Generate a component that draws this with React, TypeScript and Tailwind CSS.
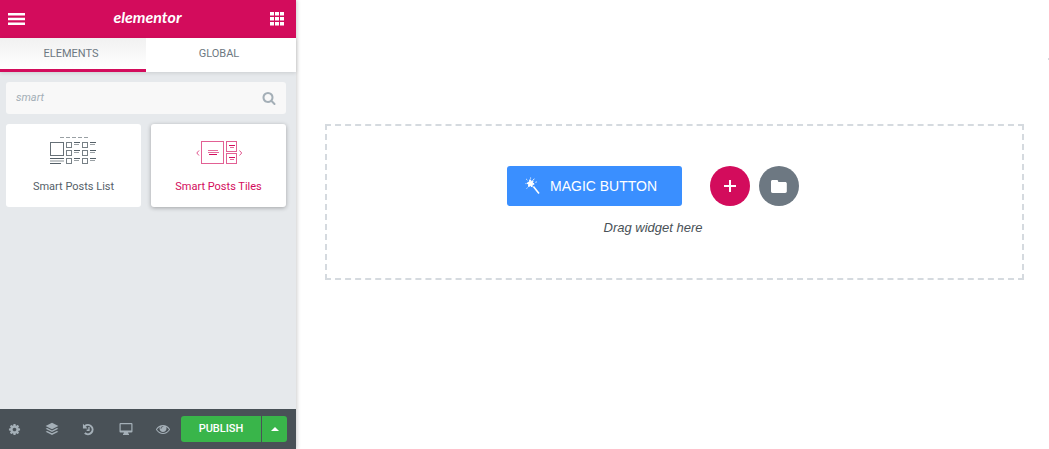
import { FC, ReactNode, useState } from "react"

type IconProps = { className?: string }

const SearchIcon: FC<IconProps> = ({ className }) => (
  <svg viewBox="0 0 1792 1792" fill="currentColor" className={className} aria-hidden="true">
    <path d="M1216 832q0-185-131.5-316.5t-316.5-131.5-316.5 131.5-131.5 316.5 131.5 316.5 316.5 131.5 316.5-131.5 131.5-316.5zm512 832q0 52-38 90t-90 38q-54 0-90-38l-343-342q-179 124-399 124-143 0-273.5-55.5t-225-150-150-225-55.5-273.5 55.5-273.5 150-225 225-150 273.5-55.5 273.5 55.5 225 150 150 225 55.5 273.5q0 220-124 399l343 343q37 37 37 90z" />
  </svg>
)

const CogIcon: FC<IconProps> = ({ className }) => (
  <svg viewBox="0 0 1792 1792" fill="currentColor" className={className} aria-hidden="true">
    <path d="M1152 896q0-106-75-181t-181-75-181 75-75 181 75 181 181 75 181-75 75-181zm512-109v222q0 12-8 23t-20 13l-185 28q-19 54-39 91 35 50 107 138 10 12 10 25t-9 23q-27 37-99 108t-94 71q-12 0-26-9l-138-108q-44 23-91 38-16 136-29 186-7 28-36 28h-222q-14 0-24.5-8.5t-11.5-21.5l-28-184q-49-16-90-37l-141 107q-10 9-25 9-14 0-25-11-126-114-165-168-7-10-7-23 0-12 8-23 15-21 51-66.5t54-70.5q-27-50-41-99l-183-27q-13-2-21-12.5t-8-23.5v-222q0-12 8-23t19-13l186-28q14-46 39-92-40-57-107-138-10-12-10-24 0-10 9-23 26-36 98.5-107.5t94.5-71.5q13 0 26 10l138 107q44-23 91-38 16-136 29-186 7-28 36-28h222q14 0 24.5 8.5t11.5 21.5l28 184q49 16 90 37l142-107q9-9 24-9 13 0 25 10 129 119 165 170 7 8 7 22 0 12-8 23-15 21-51 66.5t-54 70.5q26 50 41 98l183 28q13 2 21 12.5t8 23.5z" />
  </svg>
)

const EyeIcon: FC<IconProps> = ({ className }) => (
  <svg viewBox="0 0 1792 1792" fill="currentColor" className={className} aria-hidden="true">
    <path d="M1664 960q-152-236-381-353 61 104 61 225 0 185-131.5 316.5t-316.5 131.5-316.5-131.5-131.5-316.5q0-121 61-225-229 117-381 353 133 205 333.5 326.5t434.5 121.5 434.5-121.5 333.5-326.5zm-720-384q0-20-14-34t-34-14q-125 0-214.5 89.5t-89.5 214.5q0 20 14 34t34 14 34-14 14-34q0-86 61-147t147-61q20 0 34-14t14-34zm848 384q0 34-20 69-140 230-376.5 368.5t-499.5 138.5-499.5-139-376.5-368q-20-35-20-69t20-69q140-229 376.5-368t499.5-139 499.5 139 376.5 368q20 35 20 69z" />
  </svg>
)

const LayersIcon: FC<IconProps> = ({ className }) => (
  <svg viewBox="0 0 14 14" fill="currentColor" className={className} aria-hidden="true">
    <path d="M7 .8 13.4 4 7 7.2.6 4z" />
    <path d="M.6 6.8 2.2 6 7 8.4 11.8 6l1.6.8L7 10z" />
    <path d="M.6 9.7l1.6-.8L7 11.3l4.8-2.4 1.6.8L7 12.9z" />
  </svg>
)

const HistoryIcon: FC<IconProps> = ({ className }) => (
  <svg viewBox="0 0 14 14" fill="none" stroke="currentColor" className={className} aria-hidden="true">
    <path d="M3 3.4A5 5 0 1 1 3 10.800" strokeWidth="2.2" />
    <path d="M1 .8v5h5z" fill="currentColor" stroke="none" />
    <path d="M7.5 4.200v3.600H5" strokeWidth="1.4" />
  </svg>
)

const DesktopIcon: FC<IconProps> = ({ className }) => (
  <svg viewBox="0 0 14 14" fill="currentColor" className={className} aria-hidden="true">
    <path fillRule="evenodd" d="M1.400 1h11.200c.5 0 .9.4.9.9v7.700c0 .5-.4.9-.9.9H9l.4 1.300h.6V13H4v-1.200h.6L5 10.500H1.400a.9.9 0 0 1-.9-.9V1.900c0-.5.4-.9.9-.9zm.3 1.200v6.200h10.600V2.200z" />
  </svg>
)

const WandIcon: FC<IconProps> = ({ className }) => (
  <svg viewBox="0 0 16 18" fill="none" stroke="currentColor" className={className} aria-hidden="true">
    <path d="M5 2.600l.9 1.800 2.200-.6-.6 2.100 1.700 1.100-2 .7-.1 2.200-1.700-1.200-1.900.9.2-2.100L2 6.200l2-.9z" fill="currentColor" strokeWidth="1" />
    <path d="M8.400 9.400l5.600 7.200" strokeWidth="1.600" />
    <path d="M1.200 2l1.200 1.200M5.600.5v1.200M9.300 1.700l-1 1.300M.5 6.600h1M10.400 5.300l1.400-.4M2.400 10.600l-.7 1" strokeWidth=".9" />
  </svg>
)

const PostsListIcon: FC<IconProps> = ({ className }) => (
  <svg viewBox="0 0 48 30" fill="none" stroke="currentColor" shapeRendering="crispEdges" className={className} aria-hidden="true">
    <path d="M10 1.500h28" strokeDasharray="4 2" opacity=".6" />
    <rect x=".5" y="6.500" width="13" height="13" opacity=".9" />
    <path d="M0 22.500h14M0 27.500h11" />
    <path d="M0 25h14" strokeWidth="2" opacity=".35" />
    {[6, 14, 22].map((y) => (
      <g key={y}>
        <rect x="16.500" y={y + 0.5} width="5" height="5" opacity=".8" />
        <rect x="32.500" y={y + 0.5} width="5" height="5" opacity=".8" />
        <path d={`M24 ${y + 0.5}h6M40 ${y + 0.5}h6`} />
        <path d={`M24 ${y + 2.5}h5M40 ${y + 2.5}h5`} opacity=".6" />
      </g>
    ))}
  </svg>
)

const PostsTilesIcon: FC<IconProps> = ({ className }) => (
  <svg viewBox="0 0 48 30" fill="none" stroke="currentColor" className={className} aria-hidden="true">
    <path d="M4 14.500L1.800 17 4 19.500M44.500 14.500l2.200 2.500-2.200 2.500" opacity=".7" />
    <g shapeRendering="crispEdges">
      <g opacity=".65">
        <rect x="6.500" y="5.500" width="22" height="22" />
        <rect x="31.500" y="5.500" width="10" height="10" />
        <rect x="31.500" y="17.500" width="10" height="10" />
      </g>
      <path d="M14 18.500h8M34 21.500h6M34 9.500h6" />
      <path d="M13 14.500h10M13 16.500h11M35 11.500h4M35 23.500h4" opacity=".6" />
    </g>
  </svg>
)

const widgets: { title: string; icon: ReactNode; active?: boolean }[] = [
  { title: "Smart Posts List", icon: <PostsListIcon className="h-[30px] w-12" /> },
  { title: "Smart Posts Tiles", icon: <PostsTilesIcon className="h-[30px] w-12" />, active: true },
]

const tools = [
  { label: "Settings", icon: <CogIcon className="size-[13px]" /> },
  { label: "Navigator", icon: <LayersIcon className="size-[14px]" /> },
  { label: "History", icon: <HistoryIcon className="size-[13px]" /> },
  { label: "Responsive Mode", icon: <DesktopIcon className="size-[14px]" /> },
  { label: "Preview Changes", icon: <EyeIcon className="size-[14px]" /> },
]

const Panel: FC = () => {
  const [tab, setTab] = useState("Elements")
  const [search, setSearch] = useState("smart")

  return (
    <aside className="relative flex w-[296px] shrink-0 flex-col bg-[#e6e9ec] shadow-[1px_0_4px_rgba(0,0,0,0.2)]">
      <header className="flex h-[38px] items-center justify-between bg-[#d30c5c] pr-3 pl-2 text-white">
        <button type="button" aria-label="Menu">
          <svg viewBox="0 0 17 12" fill="currentColor" className="h-3 w-[17px]">
            <path d="M0 0h17v2.500H0zM0 4.800h17v2.500H0zM0 9.500h17V12H0z" />
          </svg>
        </button>
        <span className="pb-1 font-[Lato] text-base leading-5 font-bold italic">elementor</span>
        <button type="button" aria-label="Widgets Panel">
          <svg viewBox="0 0 14 14" fill="currentColor" className="size-[14px]">
            {[0, 5, 10].map((y) => (
              <path key={y} d={`M0 ${y}h4v3.500H0zM5 ${y}h4v3.500H5zM10 ${y}h4v3.500h-4z`} />
            ))}
          </svg>
        </button>
      </header>

      <nav className="grid h-[34px] grid-cols-[146px_1fr] bg-white shadow-[0_1px_4px_rgba(0,0,0,0.12)]">
        {["Elements", "Global"].map((name) => (
          <button
            key={name}
            type="button"
            onClick={() => setTab(name)}
            className={`border-b-3 pt-px pr-1 text-[11px] text-[#6d7882] uppercase ${
              tab === name ? "border-[#d30c5c] bg-linear-to-b from-[#f1f1f1] to-white" : "border-transparent"
            }`}
          >
            {name}
          </button>
        ))}
      </nav>

      <div className="flex flex-1 flex-col gap-[10px] pt-[10px] pr-[10px] pl-[6px]">
        <label className="flex h-8 items-center rounded-[3px] bg-[#f8f8f8] px-[10px] text-[#a4afb7]">
          <input
            type="text"
            aria-label="Search Widget"
            value={search}
            onChange={(e) => setSearch(e.target.value)}
            className="min-w-0 flex-1 bg-transparent pt-px text-[11px] italic outline-none"
          />
          <SearchIcon className="size-[14px]" />
        </label>

        <div className="grid grid-cols-2 gap-[10px]">
          {widgets.map((widget) => (
            <button
              key={widget.title}
              type="button"
              className={`flex h-[83px] flex-col items-center rounded-[3px] bg-white pt-3 text-[11px] ${
                widget.active ? "text-[#d30c5c] shadow-[0_1px_4px_rgba(0,0,0,0.3)]" : "text-[#556068]"
              }`}
            >
              {widget.icon}
              <span className="mt-[13px] leading-4">{widget.title}</span>
            </button>
          ))}
        </div>
      </div>

      <footer className="flex h-10 items-center justify-between bg-[#495157] pr-[9px] pl-2 text-[#a4afb7]">
        <div className="flex gap-[23px]">
          {tools.map((tool) => (
            <button key={tool.label} type="button" aria-label={tool.label} className="flex w-[14px] items-center">
              {tool.icon}
            </button>
          ))}
        </div>
        <div className="flex h-[26px] gap-px text-white">
          <button type="button" className="w-20 rounded-l-[3px] bg-[#39b54a] pt-px text-[11px] font-medium uppercase">
            Publish
          </button>
          <button type="button" aria-label="Save Options" className="flex w-[25px] items-center justify-center rounded-r-[3px] bg-[#39b54a]">
            <svg viewBox="0 0 8 4" fill="currentColor" className="h-1 w-2">
              <path d="M4 0l4 4H0z" />
            </svg>
          </button>
        </div>
      </footer>
    </aside>
  )
}

const Canvas: FC = () => {
  return (
    <main className="flex min-w-0 flex-1 flex-col bg-white">
      <div className="flex h-[124px] justify-end pt-[58px]">
        <span className="h-[2px] w-px bg-[#d5dadf]" />
      </div>
      <section className="mr-[25px] ml-[29px] flex h-[156px] flex-col items-center border-2 border-dashed border-[#d5dadf] pt-10 pr-[43px] font-['Liberation_Sans',sans-serif]">
        <div className="flex items-center">
          <button type="button" className="flex h-10 w-[175px] items-center rounded-[3px] bg-[#3a8fff] pl-[18px] text-sm text-white uppercase">
            <WandIcon className="mr-[9px] h-[18px] w-4" />
            Magic Button
          </button>
          <button type="button" aria-label="Add New Section" className="ml-7 flex size-10 items-center justify-center rounded-full bg-[#d30c5c] text-white">
            <svg viewBox="0 0 12 12" fill="currentColor" className="size-3">
              <path d="M5 0h2v5h5v2H7v5H5V7H0V5h5z" />
            </svg>
          </button>
          <button type="button" aria-label="Add Template" className="ml-[9px] flex size-10 items-center justify-center rounded-full bg-[#6d7882] text-white">
            <svg viewBox="0 0 16 13" fill="currentColor" className="h-[13px] w-4">
              <path d="M1.500 0h4.300c.8 0 1.400.6 1.400 1.300v.7h7c.9 0 1.600.7 1.600 1.600v7.600c0 1-.7 1.700-1.600 1.700H1.600C.7 12.900 0 12.200 0 11.300V1.500C0 .7.700 0 1.500 0z" />
            </svg>
          </button>
        </div>
        <p className="mt-3 text-[13px] leading-5 text-[#495157] italic">Drag widget here</p>
      </section>
    </main>
  )
}

const App: FC = () => {
  return (
    <div className="flex min-h-screen font-[Roboto,sans-serif]">
      <Panel />
      <Canvas />
    </div>
  )
}

export default App
